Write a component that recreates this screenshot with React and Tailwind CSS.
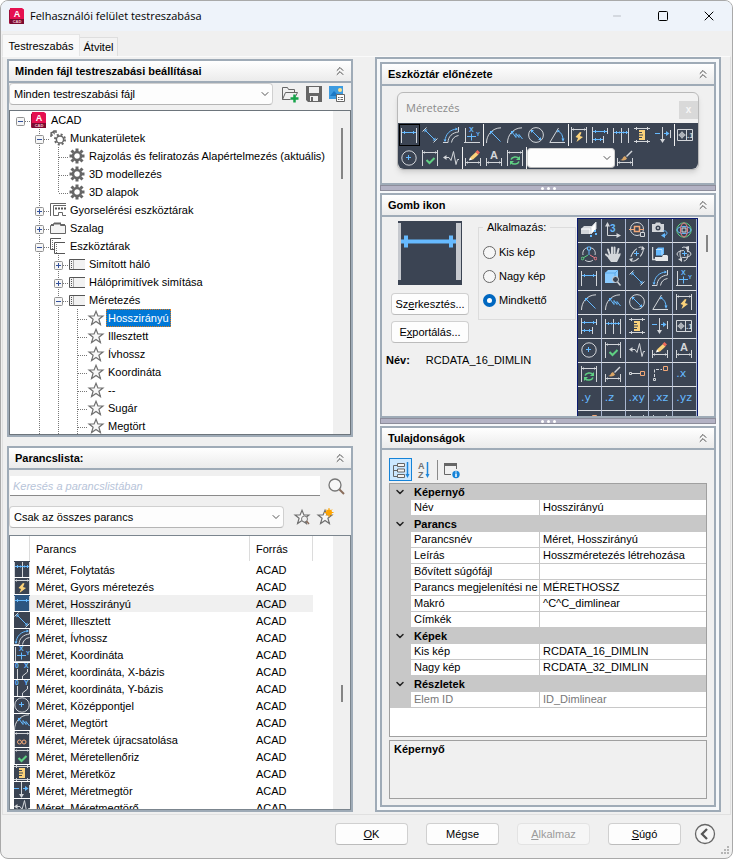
import React from "react";
import { ChevronDown, ChevronsUp, Minus, Square, X } from "lucide-react";

const WHITE = "#d3d6da";
const BLUE = "#66baff";
const YELLOW = "#fbd27a";
const GREEN = "#5fd083";
const ORANGE = "#f2a878";
const SLATE = "#3b4453";

// --- Command glyphs, all on a 16x16 grid ---
const W = ({ d, fill = "none" }) => <path d={d} stroke={WHITE} fill={fill} />;
const B = ({ d, fill = "none" }) => <path d={d} stroke={BLUE} fill={fill} />;
const T = ({ x, y, size = 7, fill = BLUE, children }) => (
  <text x={x} y={y} fontSize={size} fontWeight="bold" fontFamily="Liberation Sans, sans-serif" fill={fill}>
    {children}
  </text>
);

const TopDim = () => (
  <>
    <W d="M.5 0v16M15.5 0v16M1 2.5h14" />
    <W d="M2.5 1.5v2M13.5 1.5v2" />
  </>
);
const BottomDim = () => (
  <>
    <W d="M.5 8v8M15.5 8v8M1 12.5h14" />
    <W d="M2.5 11.5v2M13.5 11.5v2" />
  </>
);
const WhiteArc = () => <W d="M.5 16C.5 8 6 1 15 .8" />;

const GLYPHS = {
  linear: (
    <>
      <W d="M.5 1v15M15.5 1v15" />
      <B d="M1 5.5h14M3.5 4v3M12.5 4v3" />
    </>
  ),
  aligned: (
    <>
      <W d="M.5 4.5L4.500 .5M11.500 15.5l4-4" />
      <B d="M3 3l10 10" />
      <path d="M2.500 2.500h3l-3 3zM13.500 13.500h-3l3-3z" fill={BLUE} />
    </>
  ),
  arc: (
    <>
      <W d="M0 15.5h5M15.5 0v5M5 15.500C5 9.500 9.5 5.500 15.500 5" />
      <W d="M8.5 15.500C9 12 11.5 9 15.500 8.5" />
      <B d="M2 14C2.5 7 7 2.5 14 2" />
      <path d="M.5 12.500h3L2 15zM12.500 .5v3L15 2z" fill={BLUE} />
    </>
  ),
  ordinate: (
    <>
      <W d="M1.500 1v15M0 15.500h16" />
      <B d="M3 9.500h9M7.500 6.500v7" />
      <T x="5" y="5" size={7}>X</T>
      <T x="12" y="9" size={6}>Y</T>
    </>
  ),
  radius: (
    <>
      <WhiteArc />
      <B d="M5 5l9.500 9.500" />
      <path d="M4 4h3.500L4 7.500z" fill={BLUE} />
    </>
  ),
  jogged: (
    <>
      <WhiteArc />
      <B d="M5 5l4 5.500V6.500l3 4V7.500l3.500 4.500" />
      <path d="M4 4h3.500L4 7.500z" fill={BLUE} />
    </>
  ),
  diameter: (
    <>
      <circle cx="8" cy="8" r="7.400" stroke={WHITE} fill="none" />
      <B d="M3.500 3.500l9 9" />
      <path d="M3 3h3L3 6zM13 13h-3l3-3z" fill={BLUE} />
    </>
  ),
  angular: (
    <>
      <W d="M16 15.500H.800L9.500 1" />
      <B d="M9 4c3.500 1.500 5 5 5 9" />
      <path d="M8 5.500l.5-3L11 4zM12.500 11.500h3L14 15z" fill={BLUE} />
    </>
  ),
  quick: (
    <>
      <TopDim />
      <path d="M9 5L4.500 10l2.500 1-1.500 4L12 10l-3-1 1.500-3.500z" fill={YELLOW} />
    </>
  ),
  baseline: (
    <>
      <W d="M.5 0v16M15.5 1v6M11.500 9v7" />
      <B d="M1 4.500h14M3.500 3v3M12.500 3v3M1 12.500h10M3.500 11v3M8.500 11v3" />
    </>
  ),
  continued: (
    <>
      <W d="M.5 1v15M8.500 1v15M15.500 1v15" />
      <B d="M1 5.500h14M3.500 4v3M6.500 4.500v2M10.500 4.500v2M13.500 4v3" />
    </>
  ),
  space: (
    <>
      <W d="M0 1.500h16M0 14.500h16M2.500 0v3M13.500 0v3M2.500 13v3M13.500 13v3" />
      <rect x="5" y="3" width="6" height="10" fill={YELLOW} />
      <path d="M5 5.500h3M5 8h4M5 10.500h3" stroke={SLATE} />
    </>
  ),
  breakDim: (
    <>
      <B d="M0 6.500h5M9 6.500h4" />
      <path d="M11 4v5l3.500-2.500z" fill={BLUE} />
      <W d="M7.500 0v12M15.500 3v8" />
      <path d="M5 12h5l-2.500 4z" fill={WHITE} />
    </>
  ),
  tolerance: (
    <>
      <W d="M.5 2.500h15v11H.500zM9.500 2.500v11M1.500 8h7M5 4.500v7" />
      <circle cx="5" cy="8" r="2.200" stroke={WHITE} fill="none" />
      <T x="10" y="11" size={8} fill={WHITE}>.1</T>
    </>
  ),
  center: (
    <>
      <circle cx="8" cy="8" r="7.200" stroke={WHITE} fill="none" />
      <B d="M5 7.500h5M7.500 5v5" />
    </>
  ),
  inspect: (
    <>
      <TopDim />
      <path d="M4.500 10l3 3 5-5" stroke={GREEN} strokeWidth="2" fill="none" />
    </>
  ),
  jogLine: (
    <>
      <W d="M1 7.500h5l2 3 2.500-9 2.500 13 1.500-5h2" />
      <path d="M0 7.500L3.500 5v5z" fill={WHITE} />
    </>
  ),
  dimEdit: (
    <>
      <BottomDim />
      <path d="M4.500 10l1-3L11 2l2.500 2.500L8 9.500z" fill={YELLOW} />
      <path d="M10.500 2L12.500 0l2.500 2.500-2 2z" fill="#ee6a5b" />
      <path d="M4 10.500l1-3 2 2z" fill="#fff" />
    </>
  ),
  textEdit: (
    <>
      <BottomDim />
      <T x="4" y="9" size={11} fill={WHITE}>A</T>
    </>
  ),
  update: (
    <>
      <TopDim />
      <path d="M4 9.500c1-3 6-3.500 8-1M12 11.500c-1 3-6 3.500-8 1" stroke={GREEN} strokeWidth="1.500" fill="none" />
      <path d="M13 6v4H9zM3 15v-4h4z" fill={GREEN} />
    </>
  ),
  style: (
    <>
      <BottomDim />
      <path d="M9.500 6.500l5.500-5.500" stroke={WHITE} strokeWidth="1.500" />
      <path d="M3 10c3 0 2-3 5-4l2 2.500C9 10.500 6 11 3 10z" fill="#d9a566" />
    </>
  ),
  xBasis: (
    <>
      <T x="1" y="5" size={7}>0</T>
      <T x="10" y="5" size={7}>X</T>
      <W d="M3.500 6v10M13.500 6v3l-5 4v3" />
    </>
  ),
  yBasis: (
    <>
      <T x="1" y="5" size={7}>0</T>
      <T x="10" y="5" size={7}>Y</T>
      <W d="M3.500 6v10M13.500 6v3l-5 4v3" />
    </>
  ),
  reassociate: (
    <>
      <TopDim />
      <circle cx="5.500" cy="11" r="2" stroke={ORANGE} fill="none" />
      <circle cx="10" cy="11" r="2" stroke={ORANGE} fill="none" />
    </>
  ),
  slab: (
    <>
      <path d="M0 7l3-3h9v5l-3 3H0z" fill={WHITE} />
      <path d="M0 7h9v5" stroke="#fff" fill="none" />
      <path d="M10 5.500L15 0v7l-5 5z" fill="#fff" stroke={WHITE} />
      <path d="M9 13h2v2H9zM14 11h2v2h-2zM13 8h2v2h-2z" fill={BLUE} />
    </>
  ),
  ucs: (
    <>
      <W d="M2.500 3v10.500H14" />
      <path d="M0 4.500L2.500 0 5 4.500zM11.500 11v5l4.500-2.500z" fill={WHITE} />
      <T x="5" y="10" size={10}>3</T>
    </>
  ),
  basePoint: (
    <>
      <circle cx="8" cy="7" r="6.500" stroke={WHITE} fill="none" />
      <path d="M0 7.500h5M11 7.500h4" stroke={ORANGE} />
      <path d="M5.500 4.500h5v5h-5z" stroke={ORANGE} fill={SLATE} strokeWidth="1.500" />
      <path d="M11.500 10.500h4v4h-4z" stroke={WHITE} fill={SLATE} />
    </>
  ),
  camera: (
    <>
      <path d="M0 2h3l1-1.500h4L9 2h3v8H0z" fill={WHITE} />
      <circle cx="6" cy="6" r="2.500" fill={SLATE} />
      <circle cx="6" cy="6" r="1" fill={WHITE} />
      <B d="M11 9c4-1 5.500 3 2 4.500" />
      <path d="M13 11v5l-4-2.500z" fill={BLUE} />
    </>
  ),
  globe: (
    <>
      <circle cx="8" cy="8" r="7.200" stroke={GREEN} fill="none" />
      <ellipse cx="8" cy="8" rx="7" ry="3.500" stroke={BLUE} fill="none" />
      <ellipse cx="8" cy="8" rx="3.500" ry="7" stroke="#ef7c86" fill="none" />
      <path d="M6 6h4v4H6z" stroke={WHITE} fill={SLATE} />
    </>
  ),
  gizmo: (
    <>
      <path d="M2 9C1 5 4 2 6 2M10 2c3 0 5 4 4 7M4 14c2 2 6 2 8 0" stroke={WHITE} fill="none" />
      <path d="M8 4v5" stroke={BLUE} />
      <path d="M7 9l-5 3" stroke={GREEN} />
      <path d="M9 9l5 3" stroke="#ef7c86" />
      <path d="M6.500 1h3v3h-3z" stroke={BLUE} fill="none" />
      <circle cx="1.500" cy="12.500" r="1.300" stroke={GREEN} fill="none" />
      <circle cx="14.500" cy="12.500" r="1.300" stroke="#ef7c86" fill="none" />
    </>
  ),
  hand: (
    <>
      <path d="M5 9.500L3 3.500M7 8V1.500M9.500 8V1.500M12 9l1.500-6M5 12L1 8.500" stroke={WHITE} strokeWidth="2" strokeLinecap="round" />
      <path d="M4 8h9.500l2-1v2L12 16H6l-3-4z" fill={WHITE} />
    </>
  ),
  orbit: (
    <>
      <ellipse cx="8" cy="8" rx="8.500" ry="4" transform="rotate(-50 8 8)" stroke={WHITE} fill="none" strokeDasharray="10 2" />
      <path d="M12 4l4-1-2.500-3zM4 12l-4 1 2.500 3z" fill={WHITE} />
      <B d="M5 7.500h5M7.500 5v5" />
    </>
  ),
  block: (
    <>
      <path d="M.5 1v12.500h3" stroke={WHITE} fill="none" strokeWidth="1.500" />
      <path d="M4 3.500l2-2h6v6l-2 2H4z" fill={BLUE} />
      <path d="M4 3.500h6v6" stroke="#b9e0ff" fill="none" />
      <path d="M3 11h7l1-2h4l1 1v5H4l-1-1z" fill="#e6e8ea" />
    </>
  ),
  freeOrbit: (
    <>
      <ellipse cx="8" cy="8" rx="7" ry="3.500" stroke={WHITE} fill="none" strokeDasharray="11 3" />
      <ellipse cx="8" cy="8" rx="4" ry="7" stroke={WHITE} fill="none" strokeDasharray="9 3" />
      <path d="M9 1l4-1v5zM6 16v-4l-4 1z" fill={WHITE} />
      <B d="M6 7.500h5M8.500 5v5" />
    </>
  ),
  cubeZoom: (
    <>
      <path d="M0 3l3-3h10v9l-3 4H0z" fill="#8bcbff" />
      <path d="M0 3h10v10M10 3l3-3" stroke="#5aa9ea" fill="none" />
      <circle cx="10.500" cy="9.500" r="3" stroke={WHITE} fill={SLATE} />
      <path d="M12.500 12l3 3.500" stroke={WHITE} strokeWidth="1.500" />
    </>
  ),
  tracking: (
    <>
      <W d="M.5 6.500h2v2h-2zM3 7.500h8" />
      <path d="M11.500 5.500h4v4h-4z" stroke={ORANGE} fill="none" />
    </>
  ),
  from: (
    <>
      <path d="M2.500 11V3.500H10" stroke={WHITE} fill="none" strokeDasharray="3 1.500" />
      <W d="M1.500 12.500h2v2h-2z" />
      <path d="M11.500 .500h4v4h-4z" stroke={ORANGE} fill="none" />
    </>
  ),
  midpoint: (
    <>
      <path d="M11.500 1.500h4v4h-4z" stroke={ORANGE} fill="none" />
      <W d="M1 15.500L11 5" />
    </>
  ),
  slope: <W d="M2 14L14 2" />,
  cross: <W d="M1 1l14 14M15 1L1 15" />,
};

const Glyph = ({ name }) => (
  <svg viewBox="0 0 16 16" className="block h-4 w-4 shrink-0" aria-hidden="true">
    {GLYPHS[name]}
  </svg>
);

// --- Small shared icons ---
const AppIcon = () => (
  <svg viewBox="0 0 16 16" className="h-4 w-4 shrink-0">
    <path d="M0 2l3-2v14l-3 2z" fill="#9b0f3a" />
    <path d="M1 0h12l2 1.500V16H1z" fill="#e51050" />
    <path d="M1 11h14v5H1z" fill="#7c0b30" />
    <text x="8" y="9" textAnchor="middle" fontSize="9" fontWeight="bold" fontFamily="Liberation Sans, sans-serif" fill="#fff">A</text>
    <text x="8" y="15" textAnchor="middle" fontSize="4" fontWeight="bold" fontFamily="Liberation Sans, sans-serif" fill="#f3c6d3">CAD</text>
  </svg>
);

const GearIcon = () => (
  <svg viewBox="0 0 16 16" className="h-4 w-4 shrink-0">
    <circle cx="8" cy="8" r="4" stroke="#666" strokeWidth="2.500" fill="none" />
    <path d="M8 .500v3M8 12.500v3M.500 8h3M12.500 8h3M2.500 2.500l2 2M11.500 11.500l2 2M13.500 2.500l-2 2M4.500 11.500l-2 2" stroke="#666" strokeWidth="3" />
  </svg>
);

const GearsIcon = () => (
  <svg viewBox="0 0 16 16" className="h-4 w-4 shrink-0">
    <path d="M1 7V5h1L1 3l2-1 1 1V1h2v2" stroke="#666" fill="none" strokeWidth="1.500" />
    <circle cx="10" cy="9.500" r="3.600" stroke="#666" strokeWidth="1.500" fill="none" />
    <circle cx="10" cy="9.500" r="5" stroke="#666" strokeWidth="2" strokeDasharray="2 1.930" fill="none" />
  </svg>
);

const QuickBarIcon = () => (
  <svg viewBox="0 0 16 16" className="h-4 w-4 shrink-0">
    <path d="M.5 14V1.500H16M3.500 13.500v-10H16M3.500 13.500h5v-3h4v3H16" stroke="#666" fill="none" />
    <path d="M5 6.500h11" stroke="#555" strokeWidth="2" strokeDasharray="2 1" />
  </svg>
);

const RibbonIcon = () => (
  <svg viewBox="0 0 16 16" className="h-4 w-4 shrink-0">
    <path d="M.5 13.500v-8h3v-2h7v2h5v8z" stroke="#666" fill="#f4f4f4" />
    <path d="M1 5h3M4 3.500h7M11 5h4" stroke="#666" strokeWidth="2" />
  </svg>
);

const ToolbarIcon = () => (
  <svg viewBox="0 0 16 16" className="h-4 w-4 shrink-0">
    <path d="M.5 3.500H16v10H.500z" fill="#f2f2f2" />
    <path d="M16 3.500H.500v10H16" stroke="#555" fill="none" />
    <path d="M2.500 5v8" stroke="#555" strokeDasharray="1 1" />
    <path d="M4.500 4v9" stroke="#aaa" />
  </svg>
);

const ToolbarsIcon = () => (
  <svg viewBox="0 0 16 16" className="h-4 w-4 shrink-0">
    <path d="M11 .500H.500v11H4M15 4.500H4.500v11H15" stroke="#555" fill="none" />
    <path d="M2.500 2v9M6.500 6v9" stroke="#777" strokeDasharray="1 1" />
  </svg>
);

const StarIcon = ({ children }) => (
  <svg viewBox="0 0 16 16" className="h-4 w-4 shrink-0 overflow-visible">
    <path d="M8 1.300l1.900 4.700h5l-4 3.200 1.500 5.300L8 11.400l-4.400 3.100 1.500-5.300-4-3.200h5z" stroke="#707070" fill="#f8f8f8" strokeWidth="1.200" />
    {children}
  </svg>
);

const TREE_ICONS = {
  app: AppIcon,
  gears: GearsIcon,
  gear: GearIcon,
  quick: QuickBarIcon,
  ribbon: RibbonIcon,
  toolbars: ToolbarsIcon,
  toolbar: ToolbarIcon,
  star: StarIcon,
};

// guides: one character per ancestor column, "|" continues, " " is empty
// node: "-" open, "+" closed, "t" leaf, "l" last leaf
const TREE = [
  { guides: "", node: "-", icon: "app", label: "ACAD", first: true },
  { guides: " ", node: "-", icon: "gears", label: "Munkaterületek" },
  { guides: " |", node: "t", icon: "gear", label: "Rajzolás és feliratozás Alapértelmezés (aktuális)" },
  { guides: " |", node: "t", icon: "gear", label: "3D modellezés" },
  { guides: " |", node: "l", icon: "gear", label: "3D alapok" },
  { guides: " ", node: "+", icon: "quick", label: "Gyorselérési eszköztárak" },
  { guides: " ", node: "+", icon: "ribbon", label: "Szalag" },
  { guides: " ", node: "-", icon: "toolbars", label: "Eszköztárak" },
  { guides: " |", node: "+", icon: "toolbar", label: "Simított háló" },
  { guides: " |", node: "+", icon: "toolbar", label: "Hálóprimitívek simítása" },
  { guides: " |", node: "-", icon: "toolbar", label: "Méretezés" },
  { guides: " ||", node: "t", icon: "star", label: "Hosszirányú", selected: true },
  { guides: " ||", node: "t", icon: "star", label: "Illesztett" },
  { guides: " ||", node: "t", icon: "star", label: "Ívhossz" },
  { guides: " ||", node: "t", icon: "star", label: "Koordináta" },
  { guides: " ||", node: "t", icon: "star", label: "--" },
  { guides: " ||", node: "t", icon: "star", label: "Sugár" },
  { guides: " ||", node: "t", icon: "star", label: "Megtört" },
];

const COMMANDS = [
  ["continued", "Méret, Folytatás"],
  ["quick", "Méret, Gyors méretezés"],
  ["linear", "Méret, Hosszirányú"],
  ["aligned", "Méret, Illesztett"],
  ["arc", "Méret, Ívhossz"],
  ["ordinate", "Méret, Koordináta"],
  ["xBasis", "Méret, koordináta, X-bázis"],
  ["yBasis", "Méret, koordináta, Y-bázis"],
  ["center", "Méret, Középpontjel"],
  ["jogged", "Méret, Megtört"],
  ["reassociate", "Méret, Méretek újracsatolása"],
  ["inspect", "Méret, Méretellenőriz"],
  ["space", "Méret, Méretköz"],
  ["breakDim", "Méret, Méretmegtör"],
  ["jogLine", "Méret, Méretmegtörő"],
];

const TOOLBAR_ROWS = [
  ["linear", "aligned", "arc", "ordinate", "|", "radius", "jogged", "diameter", "angular", "|", "quick", "baseline", "continued", "space", "breakDim", "|", "tolerance"],
  ["center", "inspect", "jogLine", "|", "dimEdit", "textEdit", "update", "|", "select", "style"],
];

const BUTTON_IMAGES = [
  "slab", "ucs", "basePoint", "camera", "globe",
  "gizmo", "hand", "orbit", "block", "freeOrbit",
  "linear", "cubeZoom", "aligned", "arc", "ordinate",
  "radius", "jogged", "diameter", "angular", "quick",
  "baseline", "continued", "space", "breakDim", "tolerance",
  "center", "inspect", "jogLine", "dimEdit", "textEdit",
  "update", "style", "tracking", "from", ".x",
  ".y", ".z", ".xy", ".xz", ".yz",
  "midpoint", "slope", "cross", "cross", "",
];

const PROPERTIES = [
  { title: "Képernyő", rows: [["Név", "Hosszirányú"]] },
  {
    title: "Parancs",
    rows: [
      ["Parancsnév", "Méret, Hosszirányú"],
      ["Leírás", "Hosszméretezés létrehozása"],
      ["Bővített súgófájl", ""],
      ["Parancs megjelenítési ne", "MÉRETHOSSZ"],
      ["Makró", "^C^C_dimlinear"],
      ["Címkék", ""],
    ],
  },
  { title: "Képek", rows: [["Kis kép", "RCDATA_16_DIMLIN"], ["Nagy kép", "RCDATA_32_DIMLIN"]] },
  { title: "Részletek", rows: [["Elem ID", "ID_Dimlinear"]], disabled: true },
];

const Panel = ({ title, className = "", children }) => (
  <section className={`flex flex-col border-2 border-[#9fabb7] ${className}`}>
    <header className="flex h-[22px] shrink-0 items-center justify-between border-b-2 border-[#9fabb7] bg-gradient-to-b from-white to-[#ebebeb] pl-1.5 pr-1">
      <h2 className="font-bold">{title}</h2>
      <button aria-label={`${title} összecsukása`}>
        <ChevronsUp className="h-3.5 w-3.5 text-[#333]" strokeWidth={1.5} />
      </button>
    </header>
    {children}
  </section>
);

const Select = ({ label, value, className = "" }) => (
  <div className={`relative ${className}`}>
    <select
      aria-label={label}
      className="h-full w-full appearance-none rounded-sm border border-[#d0d0d0] border-b-[#b5b5b5] bg-[#fdfdfd] pl-1 pr-5"
    >
      <option>{value}</option>
    </select>
    <ChevronDown className="pointer-events-none absolute right-0.5 top-1/2 h-3 w-3 -translate-y-1/2 text-[#555]" strokeWidth={2} />
  </div>
);

const TreeNode = ({ node, first }) => (
  <svg viewBox="0 0 19 18" className="h-[18px] w-[19px] shrink-0">
    <g stroke="#777" strokeDasharray="1 1">
      {!first && <path d={node === "l" ? "M9.500 0v10" : "M9.500 0v18"} />}
      <path d="M10 10.500h9" />
    </g>
    {(node === "-" || node === "+") && (
      <>
        <rect x="5.500" y="6.500" width="8" height="8" rx="1" fill="#f6f6f6" stroke="#929292" />
        <path d={node === "+" ? "M7 10.500h5M9.500 8v5" : "M7 10.500h5"} stroke="#33519c" />
      </>
    )}
  </svg>
);

const TreeRow = ({ item }) => {
  const Icon = TREE_ICONS[item.icon];
  return (
    <li role="treeitem" aria-selected={!!item.selected} className="flex h-[18px] items-center">
      {item.guides.split("").map((g, i) => (
        <svg key={i} viewBox="0 0 19 18" className="h-[18px] w-[19px] shrink-0">
          {g === "|" && <path d="M9.500 0v18" stroke="#777" strokeDasharray="1 1" />}
        </svg>
      ))}
      <TreeNode node={item.node} first={item.first} />
      <span className="flex w-[19px] shrink-0 pl-px">
        <Icon />
      </span>
      <span
        className={
          item.selected
            ? "border border-dotted border-[#e07b1a] bg-[#0078d7] px-px leading-4 text-white"
            : "whitespace-nowrap pl-0.5"
        }
      >
        {item.label}
      </span>
    </li>
  );
};

const FileTree = () => (
  <div className="mt-[5px] flex h-[325px] overflow-hidden border border-[#6d757c] bg-white">
    <ul role="tree" className="min-w-0 flex-1 overflow-hidden pl-px">
      {TREE.map((item, i) => (
        <TreeRow key={i} item={item} />
      ))}
    </ul>
    <div className="w-[17px] bg-[#f0f0f0] pl-2 pt-[17px]">
      <div className="h-[51px] w-0.5 bg-[#858585]" />
    </div>
  </div>
);

const CommandList = () => (
  <div className="mt-[7px] flex min-h-0 shrink-0 grow basis-[260px] overflow-hidden border border-[#7b858e] bg-white">
    <div className="h-0 min-h-full min-w-0 flex-1 overflow-hidden">
      <table className="w-[303px] table-fixed border-separate border-spacing-0 text-left">
        <colgroup>
          <col className="w-5" />
          <col className="w-[220px]" />
          <col className="w-[63px]" />
        </colgroup>
        <thead>
          <tr className="h-[25px]">
            <th className="border-r border-[#dcdcdc] p-0" aria-label="Kép" />
            <th className="border-r border-[#dcdcdc] p-0 pl-1.5 font-normal">Parancs</th>
            <th className="border-r border-[#dcdcdc] p-0 pl-1.5 font-normal">Forrás</th>
          </tr>
        </thead>
        <tbody>
          {COMMANDS.map(([icon, name]) => {
            const selected = icon === "linear";
            return (
              <tr key={name} className="h-[17px]">
                <td className="p-0 pl-1 align-top">
                  <div className={`h-4 w-4 ${selected ? "bg-[#2c5580]" : "bg-[#3b4453]"}`}>
                    <Glyph name={icon} />
                  </div>
                </td>
                <td className={`p-0 pl-1.5 ${selected ? "bg-[#f0f0f0]" : ""}`}>{name}</td>
                <td className={`p-0 pl-1.5 ${selected ? "bg-[#f0f0f0]" : ""}`}>ACAD</td>
              </tr>
            );
          })}
        </tbody>
      </table>
    </div>
    <div className="flex w-[17px] flex-col items-center bg-[#f0f0f0]">
      <div className="mt-[149px] h-[17px] w-0.5 bg-[#858585]" />
    </div>
  </div>
);

const ToolbarPreview = () => (
  <div className="mx-[15px] mb-[13px] mt-1.5 rounded-md border border-[#b9b9b9] bg-[#f2f2f2] shadow-md">
    <div className="flex h-[30px] items-center justify-between pl-2">
      <span className="font-['Open_Sans',sans-serif] text-[11px] text-[#8a8a8a]">Méretezés</span>
      <button aria-label="Bezárás" className="mt-1 flex h-[18px] w-[19px] items-center justify-center bg-[#d9d9d9] text-[10px] font-bold text-[#f6f6f6]">
        x
      </button>
    </div>
    <div className="overflow-hidden rounded-b-md bg-[#3b4453] pl-px">
      {TOOLBAR_ROWS.map((row, r) => (
        <div key={r} className="flex h-[23px] items-center">
          {row.map((name, i) => {
            if (name === "|") return <span key={i} className="h-[22px] w-px bg-[#f0f0f0]" />;
            if (name === "select")
              return <Select key={i} label="Méretstílus" value="" className="h-5 w-[88px]" />;
            return (
              <button
                key={i}
                aria-label={name}
                className={`flex h-[22px] w-[21px] items-center pl-0.5 ${
                  name === "linear" ? "outline outline-1 -outline-offset-1 outline-black" : ""
                }`}
              >
                <Glyph name={name} />
              </button>
            );
          })}
        </div>
      ))}
    </div>
  </div>
);

const Splitter = () => (
  <div className="mb-0.5 flex h-1.5 shrink-0 items-center justify-center gap-[3px] border border-[#8d8d9b] bg-[#b3b2c4]">
    <span className="h-[3px] w-[3px] rounded-full bg-white" />
    <span className="h-[3px] w-[3px] rounded-full bg-white" />
    <span className="h-[3px] w-[3px] rounded-full bg-white" />
  </div>
);

const Radio = ({ label, checked }) => (
  <label className="flex h-6 items-center gap-[3px]">
    <input
      type="radio"
      name="apply"
      defaultChecked={checked}
      className="h-[13px] w-[13px] appearance-none rounded-full border border-[#666] bg-[#f6f6f6] checked:border-4 checked:border-[#0067c0] checked:bg-white"
    />
    {label}
  </label>
);

const PushButton = ({ children, disabled, className = "" }) => (
  <button
    disabled={disabled}
    className={`h-[22px] rounded border ${
      disabled
        ? "border-[#e3e3e3] bg-[#f6f6f6] text-[#9b9b9b]"
        : "border-[#d0d0d0] border-b-[#bcbcbc] bg-[#fdfdfd] text-black"
    } ${className}`}
  >
    {children}
  </button>
);

const ButtonImagePanel = () => (
  <div className="flex h-[199px] pt-px">
    <div className="min-w-0 flex-1">
      <div className="flex pl-[9px]">
        <div className="flex w-[78px] flex-col items-center">
          <div className="mb-2 mt-[3px] h-16 w-16 bg-[#3b4453]">
            <svg viewBox="0 0 64 64" className="h-16 w-16">
              <path d="M1.500 2v57" stroke="#c6c9ce" strokeWidth="3" />
              <path d="M60.500 2v57" stroke="#c6c9ce" strokeWidth="5" />
              <path d="M3 20.500h55" stroke="#66baff" strokeWidth="4" />
              <path d="M8 14.500v12M53 14.500v12" stroke="#66baff" strokeWidth="4" />
            </svg>
          </div>
          <PushButton className="mb-1.5 w-full">Sz<u>e</u>rkesztés...</PushButton>
          <PushButton className="w-full">E<u>x</u>portálás...</PushButton>
        </div>
        <fieldset className="ml-[9px] mt-0.5 h-[100px] w-[98px] border border-[#dcdcdc] pl-1 pt-1.5">
          <legend className="px-1">Alkalmazás:</legend>
          <Radio label="Kis kép" />
          <Radio label="Nagy kép" />
          <Radio label="Mindkettő" checked />
        </fieldset>
      </div>
      <p className="mt-2.5 flex gap-4 pl-1">
        <b>Név:</b>
        <span>RCDATA_16_DIMLIN</span>
      </p>
    </div>
    <div className="grid w-[121px] auto-rows-[24px] grid-cols-5 overflow-hidden border border-b-0 border-[#0a1a6e] bg-[#3b4453]">
      {BUTTON_IMAGES.map((name, i) => (
        <button
          key={i}
          aria-label={name}
          className="flex items-start overflow-hidden border-b border-r border-b-[#dcdfe4] border-r-[#a9b6cf] pl-[3px] pt-[3px]"
        >
          {name.startsWith(".") ? (
            <span className="font-['DejaVu_Sans',sans-serif] text-[11px] leading-4 text-[#66baff]">{name}</span>
          ) : (
            <Glyph name={name} />
          )}
        </button>
      ))}
    </div>
    <div className="w-4 pl-2 pt-[17px]">
      <div className="h-[17px] w-0.5 bg-[#858585]" />
    </div>
  </div>
);

const PropertyGrid = () => (
  <div className="flex flex-1 flex-col px-[7px] pb-1.5 pt-[7px]">
    <div className="flex h-[25px] items-center">
      <button aria-label="Kategóriák szerint" className="flex h-[23px] w-[23px] items-center justify-center border border-[#1583d8] bg-[#cce8ff]">
        <svg viewBox="0 0 18 18" className="h-[18px] w-[18px]">
          <path d="M5 4.500H1.500v11H5M1.500 9.500H5" stroke="#666" fill="none" />
          <path d="M5.500 2.500h7v3h-7zM5.500 8h7v3h-7zM5.500 13.500h7v3h-7z" stroke="#666" fill="#f5f5f5" />
          <path d="M15.500 1v13" stroke="#1d86dc" strokeWidth="1.500" />
          <path d="M13.500 13h4l-2 4z" fill="#1d86dc" />
        </svg>
      </button>
      <button aria-label="Betűrendben" className="flex h-[23px] w-[23px] items-center justify-center">
        <svg viewBox="0 0 18 18" className="h-[18px] w-[18px]">
          <text x="3" y="8" fontSize="9" fontWeight="bold" fontFamily="Liberation Sans, sans-serif" fill="#707070">A</text>
          <text x="3" y="17" fontSize="9" fontWeight="bold" fontFamily="Liberation Sans, sans-serif" fill="#707070">Z</text>
          <path d="M12.500 1v13" stroke="#1d86dc" strokeWidth="1.500" />
          <path d="M10.500 13h4l-2 4z" fill="#1d86dc" />
        </svg>
      </button>
      <span className="mx-0.5 h-5 w-px bg-[#8a8a8a]" />
      <button aria-label="Tulajdonságlapok" className="flex h-[23px] w-[23px] items-center justify-center">
        <svg viewBox="0 0 18 18" className="h-[18px] w-[18px] overflow-visible">
          <path d="M8 13.500H1.500v-11h12V8" stroke="#666" fill="none" />
          <path d="M1 3.500h13" stroke="#666" strokeWidth="3" />
          <circle cx="13" cy="13.500" r="3.700" fill="#1583d8" />
          <path d="M13 12.500v3.500M13 10.500v1" stroke="#fff" strokeWidth="1.500" />
        </svg>
      </button>
    </div>
    <div className="mt-px flex-1 border border-[#a0a0a0] bg-white">
      <table className="w-full table-fixed border-separate border-spacing-0 text-left">
        <colgroup>
          <col className="w-[21px]" />
          <col className="w-[129px]" />
          <col />
        </colgroup>
        {PROPERTIES.map((group) => (
          <tbody key={group.title}>
            <tr className="h-4 bg-[#c8c8c8]">
              <th className="p-0 pl-1">
                <ChevronDown className="h-3 w-3 text-[#222]" strokeWidth={3} />
              </th>
              <th colSpan={2} className="p-0 pl-[3px] leading-4">{group.title}</th>
            </tr>
            {group.rows.map(([name, value]) => (
              <tr key={name} className={`h-4 ${group.disabled ? "text-[#787878]" : ""}`}>
                <td className="bg-[#c8c8c8] p-0" />
                <th className="whitespace-nowrap border-b border-r border-[#c8c8c8] p-0 pl-[3px] font-normal leading-[15px]">
                  {name}
                </th>
                <td className="border-b border-[#c8c8c8] p-0 pl-[3px] leading-[15px]">{value}</td>
              </tr>
            ))}
          </tbody>
        ))}
      </table>
    </div>
    <div className="mt-[3px] h-[59px] border border-[#a0a0a0] px-1 pt-px font-bold">Képernyő</div>
  </div>
);

const App = () => (
  <div className="min-h-screen bg-white font-['Liberation_Sans',Arial,sans-serif] text-[11px] leading-[14px] text-black">
    <div className="flex min-h-screen flex-col overflow-hidden rounded-lg border border-[#a9a9a9] bg-[#f0f0f0]">
      {/* Title bar */}
      <div className="flex h-[30px] items-center bg-[#eef3fa] pl-2">
        <AppIcon />
        <h1 className="flex-1 pl-[5px] font-['Open_Sans',sans-serif] text-[11px]">
          Felhasználói felület testreszabása
        </h1>
        <button aria-label="Kis méret" className="flex w-[46px] justify-center text-[#b9bdc4]">
          <Minus className="h-3 w-3" strokeWidth={2} />
        </button>
        <button aria-label="Teljes méret" className="flex w-[46px] justify-center">
          <Square className="h-3 w-3" strokeWidth={2} />
        </button>
        <button aria-label="Bezárás" className="flex w-[46px] justify-center">
          <X className="h-4 w-4" strokeWidth={1.5} />
        </button>
      </div>

      {/* Tabs */}
      <div role="tablist" className="flex h-[25px] items-end pl-px pt-[3px]">
        <button role="tab" aria-selected="true" className="h-[22px] w-[78px] border border-b-0 border-[#e5e5e5] bg-[#f9f9f9]">
          Testreszabás
        </button>
        <button role="tab" aria-selected="false" className="h-[19px] w-[38px] border border-b-0 border-l-0 border-[#dedede] bg-[#f3f3f3]">
          Átvitel
        </button>
      </div>

      <div className="mx-px grid flex-1 grid-cols-2 gap-[22px] border border-[#e0e0e0] border-t-[#fafafa] pb-0.5 pl-1 pr-[9px]">
        <div className="flex flex-col pt-0.5">
          <Panel title="Minden fájl testreszabási beállításai">
            <div className="flex items-center">
              <Select label="Testreszabási fájl" value="Minden testreszabási fájl" className="h-[22px] flex-1" />
              <div className="flex gap-[7px] pl-[9px] pr-1.5">
                <button aria-label="Betöltés">
                  <svg viewBox="0 0 17 17" className="h-[17px] w-[17px] overflow-visible">
                    <path d="M.5 13.500V1.500h5l1 2h6v3M.500 13.500l3-7h12l-2 4M.500 13.500h8" stroke="#666" fill="none" />
                    <path d="M12.500 8.500v8M8.500 12.500h8" stroke="#16a34a" strokeWidth="2.500" />
                  </svg>
                </button>
                <button aria-label="Mentés">
                  <svg viewBox="0 0 16 16" className="h-4 w-4">
                    <path d="M0 0h16v16H2l-2-2z" fill="#666" />
                    <path d="M3 1h10v6H3zM4 10h8v5H4z" fill="#f0f0f0" />
                    <path d="M5 11h2v4H5z" fill="#666" />
                  </svg>
                </button>
                <button aria-label="Képkezelő">
                  <svg viewBox="0 0 16 16" className="h-4 w-4">
                    <path d="M0 0h14v13H0z" fill="#3d9be0" />
                    <path d="M1 10l4-5 5 5z" fill="#1b78c4" />
                    <circle cx="11" cy="4" r="2" fill="#ffe28a" />
                    <path d="M7.500 8.500h8v7h-8z" stroke="#666" fill="#fff" />
                    <path d="M9 11.500h1.500M11.500 11.500H14M9 13.500h1.500M11.500 13.500H14" stroke="#666" />
                  </svg>
                </button>
              </div>
            </div>
            <FileTree />
          </Panel>

          <Panel title="Parancslista:" className="mt-[9px] flex-1">
            <div className="flex items-center pl-px pr-1.5 pt-1.5">
              <input
                type="text"
                aria-label="Keresés a parancslistában"
                placeholder="Keresés a parancslistában"
                className="h-5 min-w-0 flex-1 border-b border-[#8a8a8a] bg-white px-[3px] italic outline-none placeholder:text-[#b7c4d9]"
              />
              <button aria-label="Keresés" className="ml-2">
                <svg viewBox="0 0 17 17" className="h-[17px] w-[17px]">
                  <circle cx="7" cy="7" r="6" stroke="#777" strokeWidth="1.300" fill="#f7f7f7" />
                  <path d="M11.500 11.500l4.500 4.500" stroke="#8a6d5c" strokeWidth="2" />
                </svg>
              </button>
            </div>
            <div className="flex items-center pt-2.5">
              <Select label="Parancskategória" value="Csak az összes parancs" className="h-[22px] flex-1" />
              <div className="flex gap-[7px] pl-2.5 pr-[18px]">
                <button aria-label="Parancs keresése">
                  <StarIcon>
                    <circle cx="10.500" cy="10" r="3" stroke="#777" fill="#f0f0f0" />
                    <path d="M12.500 12l2.500 3" stroke="#8a6d5c" strokeWidth="1.500" />
                  </StarIcon>
                </button>
                <button aria-label="Új parancs">
                  <StarIcon>
                    <circle cx="12" cy="3.500" r="3" fill="#ffa400" />
                    <path d="M12-1v9M7.500 3.500h9M9 .500l6 6M15 .500l-6 6" stroke="#ffa400" />
                  </StarIcon>
                </button>
              </div>
            </div>
            <CommandList />
          </Panel>
        </div>

        <div className="flex flex-col border-2 border-[#9fabb7] bg-[#f6f8fa] p-[3px]">
          <Panel title="Eszköztár előnézete" className="bg-[#f0f0f0]">
            <ToolbarPreview />
          </Panel>
          <Splitter />
          <Panel title="Gomb ikon" className="bg-[#f0f0f0]">
            <ButtonImagePanel />
          </Panel>
          <Splitter />
          <Panel title="Tulajdonságok" className="flex-1 bg-[#f0f0f0]">
            <PropertyGrid />
          </Panel>
        </div>
      </div>

      {/* Footer */}
      <div className="relative flex h-[43px] items-center justify-end pb-1.5 pr-4">
        <div className="mr-[13px] flex gap-[18px]">
          <PushButton className="w-[73px]"><u>O</u>K</PushButton>
          <PushButton className="w-[73px]">Mé<u>g</u>se</PushButton>
          <PushButton className="w-[73px]" disabled><u>A</u>lkalmaz</PushButton>
          <PushButton className="w-[73px]"><u>S</u>úgó</PushButton>
        </div>
        <button aria-label="Kevesebb">
          <svg viewBox="0 0 22 22" className="block h-[22px] w-[22px]">
            <circle cx="11" cy="11" r="9.500" stroke="#666" strokeWidth="1.300" fill="#f6f6f6" />
            <path d="M13 6l-5 5 5 5" stroke="#555" strokeWidth="2.300" fill="none" />
          </svg>
        </button>
        <svg viewBox="0 0 10 10" className="absolute bottom-0.5 right-0.5 h-2.5 w-2.5">
          <path d="M7 0h2v2H7zM4 3h2v2H4zM7 3h2v2H7zM1 6h2v2H1zM4 6h2v2H4zM7 6h2v2H7z" fill="#b5b5b5" />
        </svg>
      </div>
    </div>
  </div>
);

export default App;
